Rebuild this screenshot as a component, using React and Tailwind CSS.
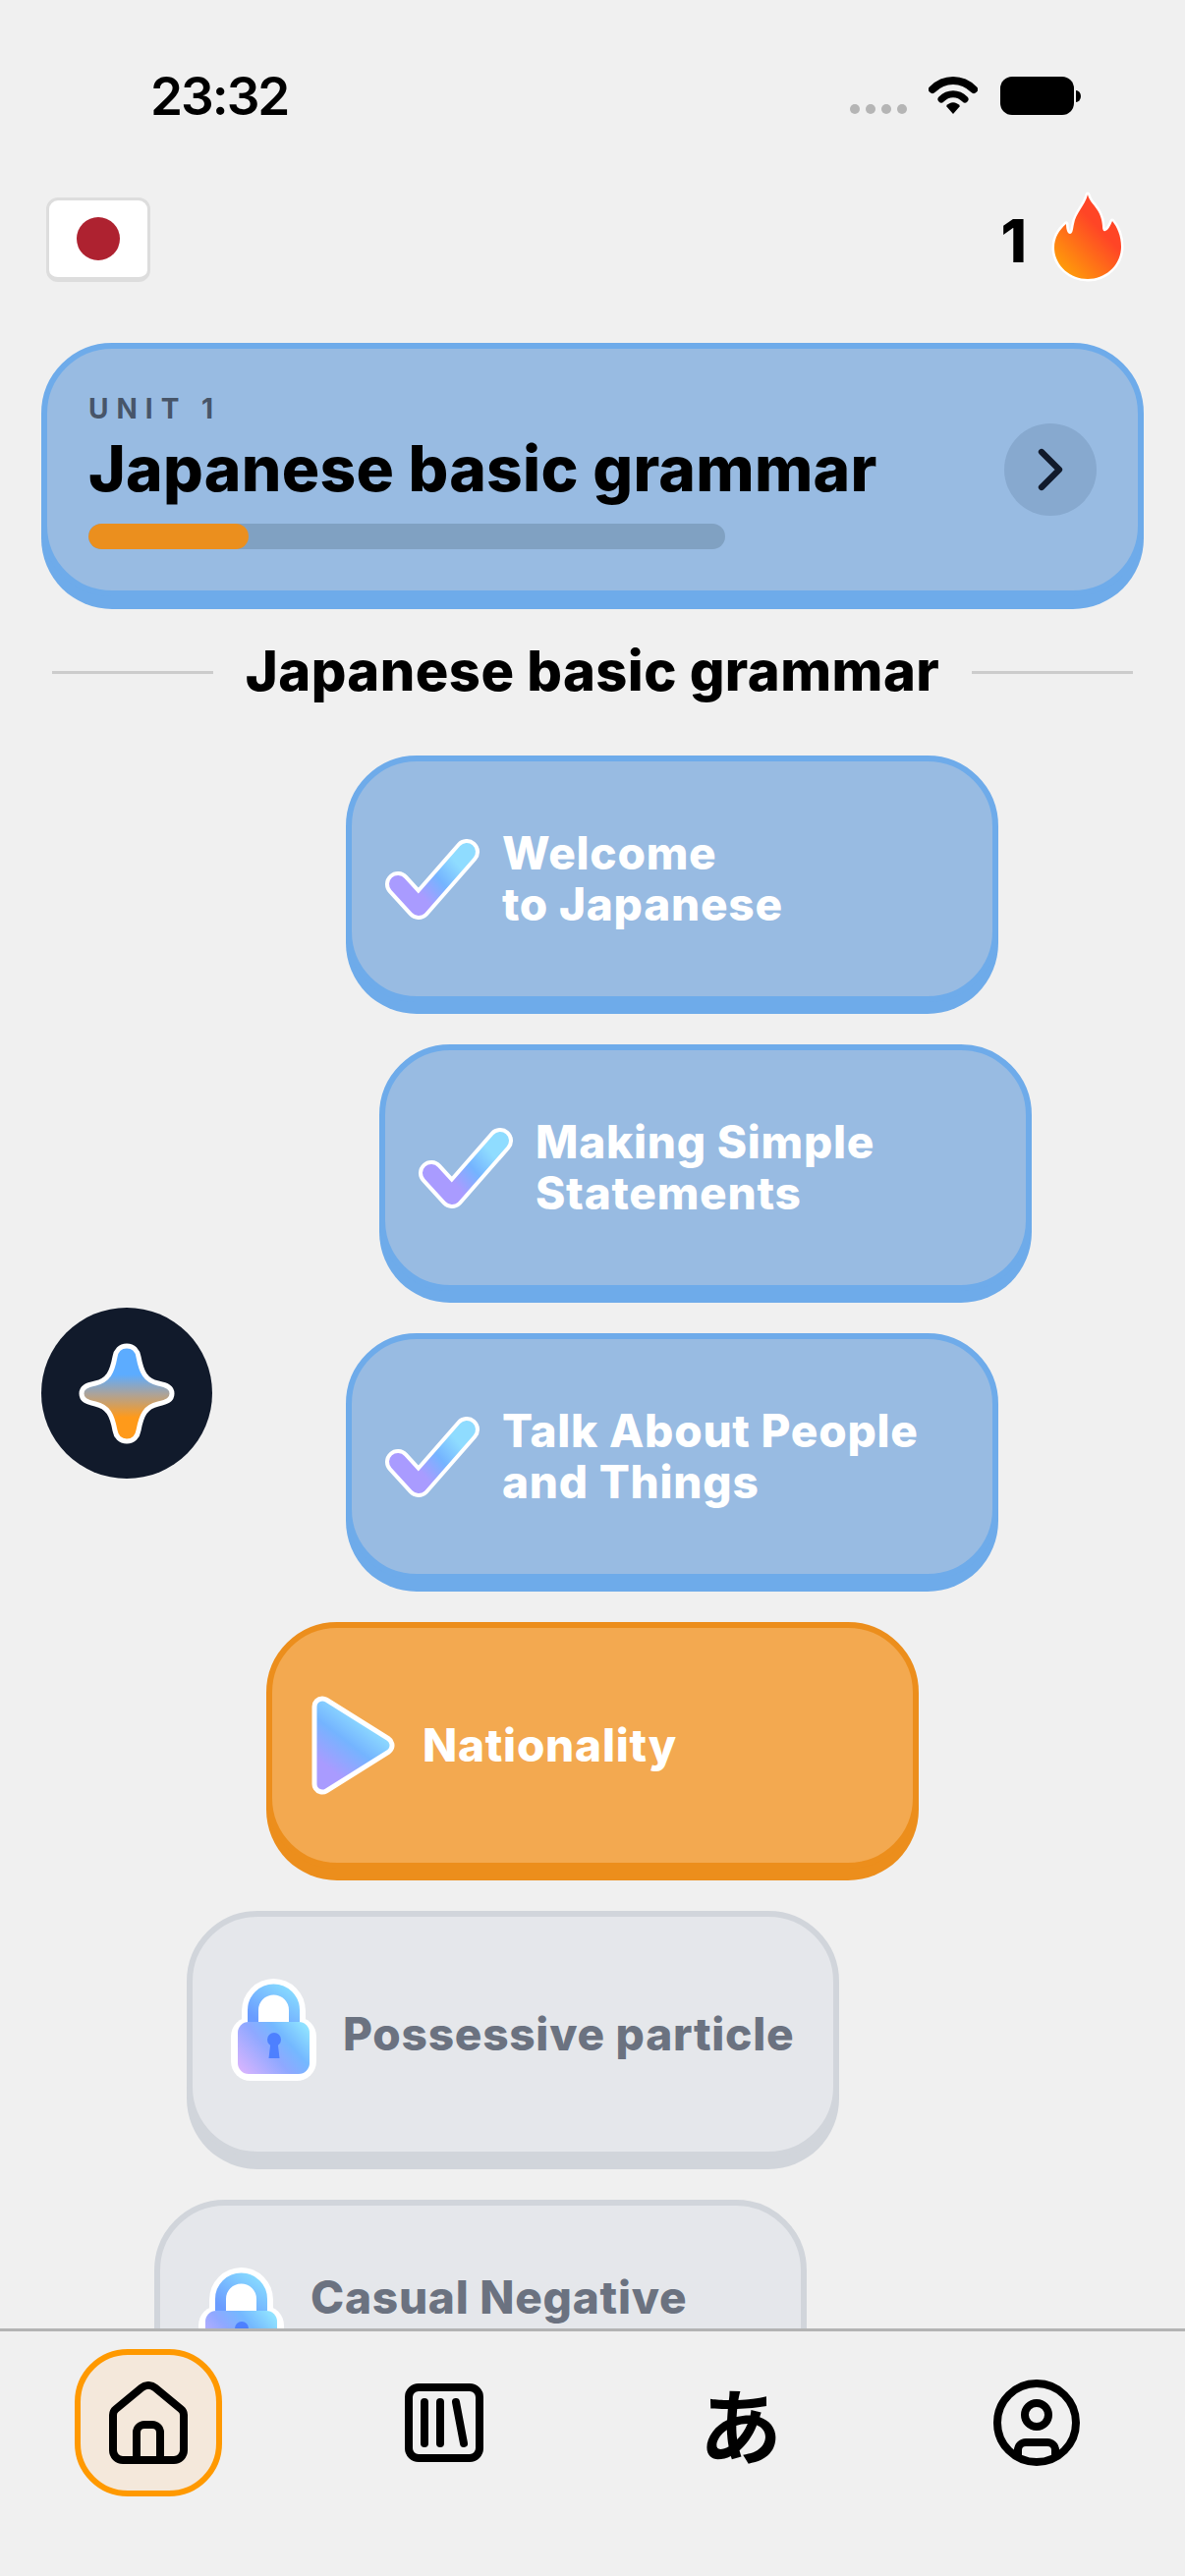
import { ChevronRight } from "lucide-react";

const FONT = "font-['Inter','Noto_Sans',sans-serif]";

const LESSONS = [
  { title: ["Welcome", "to Japanese"], status: "done", offset: "ml-[352px]" },
  { title: ["Making Simple", "Statements"], status: "done", offset: "ml-[386px]" },
  { title: ["Talk About People", "and Things"], status: "done", offset: "ml-[352px]" },
  { title: ["Nationality"], status: "current", offset: "ml-[271px]" },
  { title: ["Possessive particle"], status: "locked", offset: "ml-[190px]" },
  { title: ["Casual Negative", "\u00a0"], status: "locked", offset: "ml-[157px]" },
];

const CARD_STYLES = {
  done: "bg-[#98bbe2] border-[#6eabea] shadow-[0_12px_0_#6eabea] text-white",
  current: "bg-[#f3a950] border-[#ec8e1c] shadow-[0_12px_0_#ec8e1c] text-white",
  locked: "bg-[#e5e7eb] border-[#d1d5db] shadow-[0_12px_0_#d1d5db] text-[#6b7280]",
};

function CheckIcon() {
  return (
    <svg width="96" height="82" viewBox="0 0 96 82" fill="none">
      <defs>
        <linearGradient id="check-grad" gradientUnits="userSpaceOnUse" x1="18" y1="66" x2="80" y2="14">
          <stop offset="0.25" stopColor="#a99bff" />
          <stop offset="0.55" stopColor="#74b4ff" />
          <stop offset="0.85" stopColor="#8fdcff" />
        </linearGradient>
      </defs>
      <polyline points="13,46 34,69 83,13" stroke="#fff" strokeWidth="26" strokeLinecap="round" strokeLinejoin="round" />
      <polyline points="13,46 34,69 83,13" stroke="url(#check-grad)" strokeWidth="18" strokeLinecap="round" strokeLinejoin="round" />
    </svg>
  );
}

function PlayIcon() {
  return (
    <svg width="85" height="101" viewBox="0 0 85 101" fill="none">
      <defs>
        <linearGradient id="play-grad" gradientUnits="userSpaceOnUse" x1="12" y1="85" x2="62" y2="20">
          <stop offset="0.15" stopColor="#a99bff" />
          <stop offset="0.55" stopColor="#74b4ff" />
          <stop offset="0.9" stopColor="#8fdcff" />
        </linearGradient>
      </defs>
      <path d="M11 11 L74 50.5 L11 90 Z" fill="#fff" stroke="#fff" strokeWidth="21" strokeLinejoin="round" />
      <path d="M11 11 L74 50.5 L11 90 Z" fill="url(#play-grad)" stroke="url(#play-grad)" strokeWidth="11" strokeLinejoin="round" />
    </svg>
  );
}

function LockIcon({ id }) {
  return (
    <svg width="87" height="104" viewBox="0 0 87 104" fill="none" className="-translate-y-[5px]">
      <defs>
        <linearGradient id={`lock-body-${id}`} gradientUnits="userSpaceOnUse" x1="12" y1="97" x2="72" y2="44">
          <stop offset="0" stopColor="#d8b4fe" />
          <stop offset="0.45" stopColor="#8fa8ff" />
          <stop offset="0.7" stopColor="#74b8ff" />
          <stop offset="1" stopColor="#90e2ff" />
        </linearGradient>
        <linearGradient id={`lock-arch-${id}`} gradientUnits="userSpaceOnUse" x1="30" y1="44" x2="56" y2="6">
          <stop offset="0" stopColor="#6a9cff" />
          <stop offset="1" stopColor="#88dcff" />
        </linearGradient>
      </defs>
      <path d="M11 45 V33 a32.5 33 0 0 1 65 0 V45 Z" fill="#fff" />
      <rect x="0" y="39" width="87" height="65" rx="20" fill="#fff" />
      <path d="M22.5 44 V32 a21 21 0 0 1 42 0 V44" stroke={`url(#lock-arch-${id})`} strokeWidth="11" />
      <rect x="7" y="44" width="73" height="53" rx="11" fill={`url(#lock-body-${id})`} />
      <circle cx="44" cy="62" r="7" fill="#4d80ff" />
      <path d="M40.5 64 h7 l2 17 h-11 Z" fill="#4d80ff" />
    </svg>
  );
}

function LessonCard({ lesson, index }) {
  return (
    <div className={`w-[664px] h-[251px] shrink-0 flex items-center gap-[23px] pl-[34px] border-[6px] rounded-[72px] ${lesson.offset} ${CARD_STYLES[lesson.status]}`}>
      <div className="w-[96px] flex justify-center shrink-0">
        {lesson.status === "done" && <CheckIcon />}
        {lesson.status === "current" && <PlayIcon />}
        {lesson.status === "locked" && <LockIcon id={index} />}
      </div>
      <div className="mb-[2px] text-[46px] leading-[52px] font-extrabold tracking-[0.75px] whitespace-nowrap">
        {lesson.title.map((line) => (
          <div key={line}>{line}</div>
        ))}
      </div>
    </div>
  );
}

function StatusBar() {
  return (
    <div className="h-[201px] shrink-0 flex justify-between items-start pl-[153px] pr-[106px] pt-[66px]">
      <div className="text-[53px] leading-[64px] font-semibold text-black tracking-[-2px]">23:32</div>
      <div className="flex items-start pt-[12px]">
        <div className="flex gap-[6px] mt-[28px] mr-[22px]">
          <div className="w-[10px] h-[10px] rounded-full bg-[#b5b5b5]" />
          <div className="w-[10px] h-[10px] rounded-full bg-[#b5b5b5]" />
          <div className="w-[10px] h-[10px] rounded-full bg-[#b5b5b5]" />
          <div className="w-[10px] h-[10px] rounded-full bg-[#b5b5b5]" />
        </div>
        <svg width="50" height="38" viewBox="0 0 50 38" fill="none" className="mr-[23px]">
          <path d="M4 13 C16 1 34 1 46 13" stroke="#000" strokeWidth="8" strokeLinecap="round" />
          <path d="M13 23 C20 16 30 16 37 23" stroke="#000" strokeWidth="7" strokeLinecap="round" />
          <path d="M25 38 L18 30 C22 25 28 25 32 30 Z" fill="#000" />
        </svg>
        <svg width="82" height="40" viewBox="0 0 82 40">
          <rect x="0" y="0" width="75" height="39" rx="12" fill="#000" />
          <path d="M77 14 a5 6 0 0 1 0 12 Z" fill="#000" />
        </svg>
      </div>
    </div>
  );
}

function Flame() {
  return (
    <svg width="74" height="93" viewBox="0 0 74 93">
      <defs>
        <linearGradient id="flame-grad" gradientUnits="userSpaceOnUse" x1="10" y1="78" x2="60" y2="30">
          <stop offset="0" stopColor="#ff9a0a" />
          <stop offset="0.8" stopColor="#ff4526" />
        </linearGradient>
      </defs>
      <path
        d="M37 4 C39 14 51 18 52 36 C52 40 53 42 55 41 C58 40 60 36 62 31 C67 37 71 46 71 57 C71 76 55 90 37 90 C19 90 3 76 3 58 C3 48 8 40 15 34 C15 38 16 44 19 44 C22 44 22 38 23 34 C25 22 34 16 37 4 Z"
        fill="url(#flame-grad)"
        stroke="#fff"
        strokeWidth="5"
        strokeLinejoin="round"
        paintOrder="stroke"
      />
    </svg>
  );
}

function AiButton() {
  return (
    <div className="absolute left-[42px] top-[1331px] w-[174px] h-[174px] rounded-full bg-[#111a2b] flex items-center justify-center">
      <svg width="98" height="105" viewBox="0 0 98 105">
        <defs>
          <linearGradient id="star-grad" x1="0" y1="0" x2="0" y2="1">
            <stop offset="0.3" stopColor="#5cacff" />
            <stop offset="0.5" stopColor="#aaa39c" />
            <stop offset="0.75" stopColor="#ff9a1a" />
          </linearGradient>
        </defs>
        <path
          d="M49 4 C56 4 60 9 61 15 C64 31 68 39 81 42 C90 44 95 46 95 52.500 C95 59 90 61 81 63 C68 66 64 74 61 90 C60 96 56 101 49 101 C42 101 38 96 37 90 C34 74 30 66 17 63 C8 61 3 59 3 52.500 C3 46 8 44 17 42 C30 39 34 31 37 15 C38 9 42 4 49 4 Z"
          fill="url(#star-grad)"
          stroke="#fff"
          strokeWidth="5"
        />
      </svg>
    </div>
  );
}

function BottomNav() {
  return (
    <div className="h-[252px] shrink-0 border-t-[3px] border-[#b3b3b3] bg-[#f0f0f0] grid grid-cols-4 items-start justify-items-center pt-[18px]">
      <div className="w-[150px] h-[150px] rounded-[54px] border-[6px] border-[#ff9900] bg-[#f4e8db] flex items-center justify-center">
        <svg width="80" height="84" viewBox="0 0 80 84" fill="none" stroke="#000" strokeWidth="8" strokeLinejoin="round">
          <path d="M4 34 a8 8 0 0 1 3-6 L33 6.500 a11 11 0 0 1 14 0 L73 28 a8 8 0 0 1 3 6 V70 a10 10 0 0 1-10 10 H14 a10 10 0 0 1-10-10 Z" />
          <path d="M28 80 V52 a8 8 0 0 1 8-8 h8 a8 8 0 0 1 8 8 V80" />
        </svg>
      </div>
      <div className="h-[150px] flex items-center">
        <svg width="80" height="80" viewBox="0 0 80 80" fill="none" stroke="#000" strokeWidth="8" strokeLinecap="round">
          <rect x="4" y="4" width="72" height="72" rx="10" />
          <path d="M20 19 V61" />
          <path d="M36 19 V61" />
          <path d="M52 19 L60 61" />
        </svg>
      </div>
      <div className="h-[150px] flex items-center text-[84px] leading-none font-bold text-black font-['Noto_Sans_CJK_JP',sans-serif]">あ</div>
      <div className="h-[150px] flex items-center">
        <svg width="88" height="88" viewBox="0 0 88 88" fill="none" stroke="#000" strokeWidth="8">
          <circle cx="44" cy="44" r="40" />
          <circle cx="44" cy="36" r="12" />
          <path d="M25 78 V72 a8 8 0 0 1 8-8 h22 a8 8 0 0 1 8 8 V78" />
        </svg>
      </div>
    </div>
  );
}

export default function App() {
  return (
    <div className={`relative w-[1206px] h-[2622px] overflow-hidden bg-[#f0f0f0] flex flex-col text-black ${FONT}`}>
      <div className="flex-1 min-h-0 overflow-hidden flex flex-col">
        <StatusBar />

        <div className="h-[86px] shrink-0 flex justify-between items-end pl-[47px] pr-[62px]">
          <div className="w-[106px] h-[86px] rounded-[12px] bg-white border-[3px] border-b-[5px] border-[#dddddd] flex items-center justify-center">
            <div className="w-[44px] h-[44px] rounded-full bg-[#ae2230]" />
          </div>
          <div className="flex items-end gap-[25px]">
            <div className="text-[60px] leading-[60px] font-extrabold mb-[12px]">1</div>
            <Flame />
          </div>
        </div>

        {/* unit header */}
        <div className="mt-[62px] mx-[42px] h-[258px] shrink-0 rounded-[72px] border-[6px] border-[#6eabea] bg-[#98bbe2] shadow-[0_13px_0_#6eabea] flex items-center justify-between pl-[42px] pr-[42px]">
          <div className="flex flex-col pt-[1px]">
            <div className="text-[28px] leading-[34px] font-bold tracking-[8px] text-[#475569]">UNIT 1</div>
            <div className="mt-[6px] text-[64px] leading-[76px] font-extrabold tracking-[0.3px] text-black">Japanese basic grammar</div>
            <div className="mt-[18px] w-[648px] h-[26px] rounded-full bg-[#80a1c2] overflow-hidden">
              <div className="w-[163px] h-full rounded-full bg-[#eb8f1e]" />
            </div>
          </div>
          <div className="w-[94px] h-[94px] rounded-full bg-[#87a9cf] flex items-center justify-center text-[#111a2b]">
            <ChevronRight size={72} strokeWidth={2.1} />
          </div>
        </div>

        <div className="mt-[46px] mb-[1px] mx-[53px] h-[60px] shrink-0 flex items-center gap-[33px]">
          <div className="flex-1 h-[3px] bg-[#cccccc] translate-y-[1px]" />
          <div className="text-[56px] leading-[60px] font-extrabold tracking-[0.45px] whitespace-nowrap">Japanese basic grammar</div>
          <div className="flex-1 h-[3px] bg-[#cccccc] translate-y-[1px]" />
        </div>

        <div className="mt-[55px] flex flex-col gap-[43px]">
          {LESSONS.map((lesson, i) => (
            <LessonCard key={i} lesson={lesson} index={i} />
          ))}
        </div>
      </div>

      <BottomNav />
      <AiButton />
    </div>
  );
}
